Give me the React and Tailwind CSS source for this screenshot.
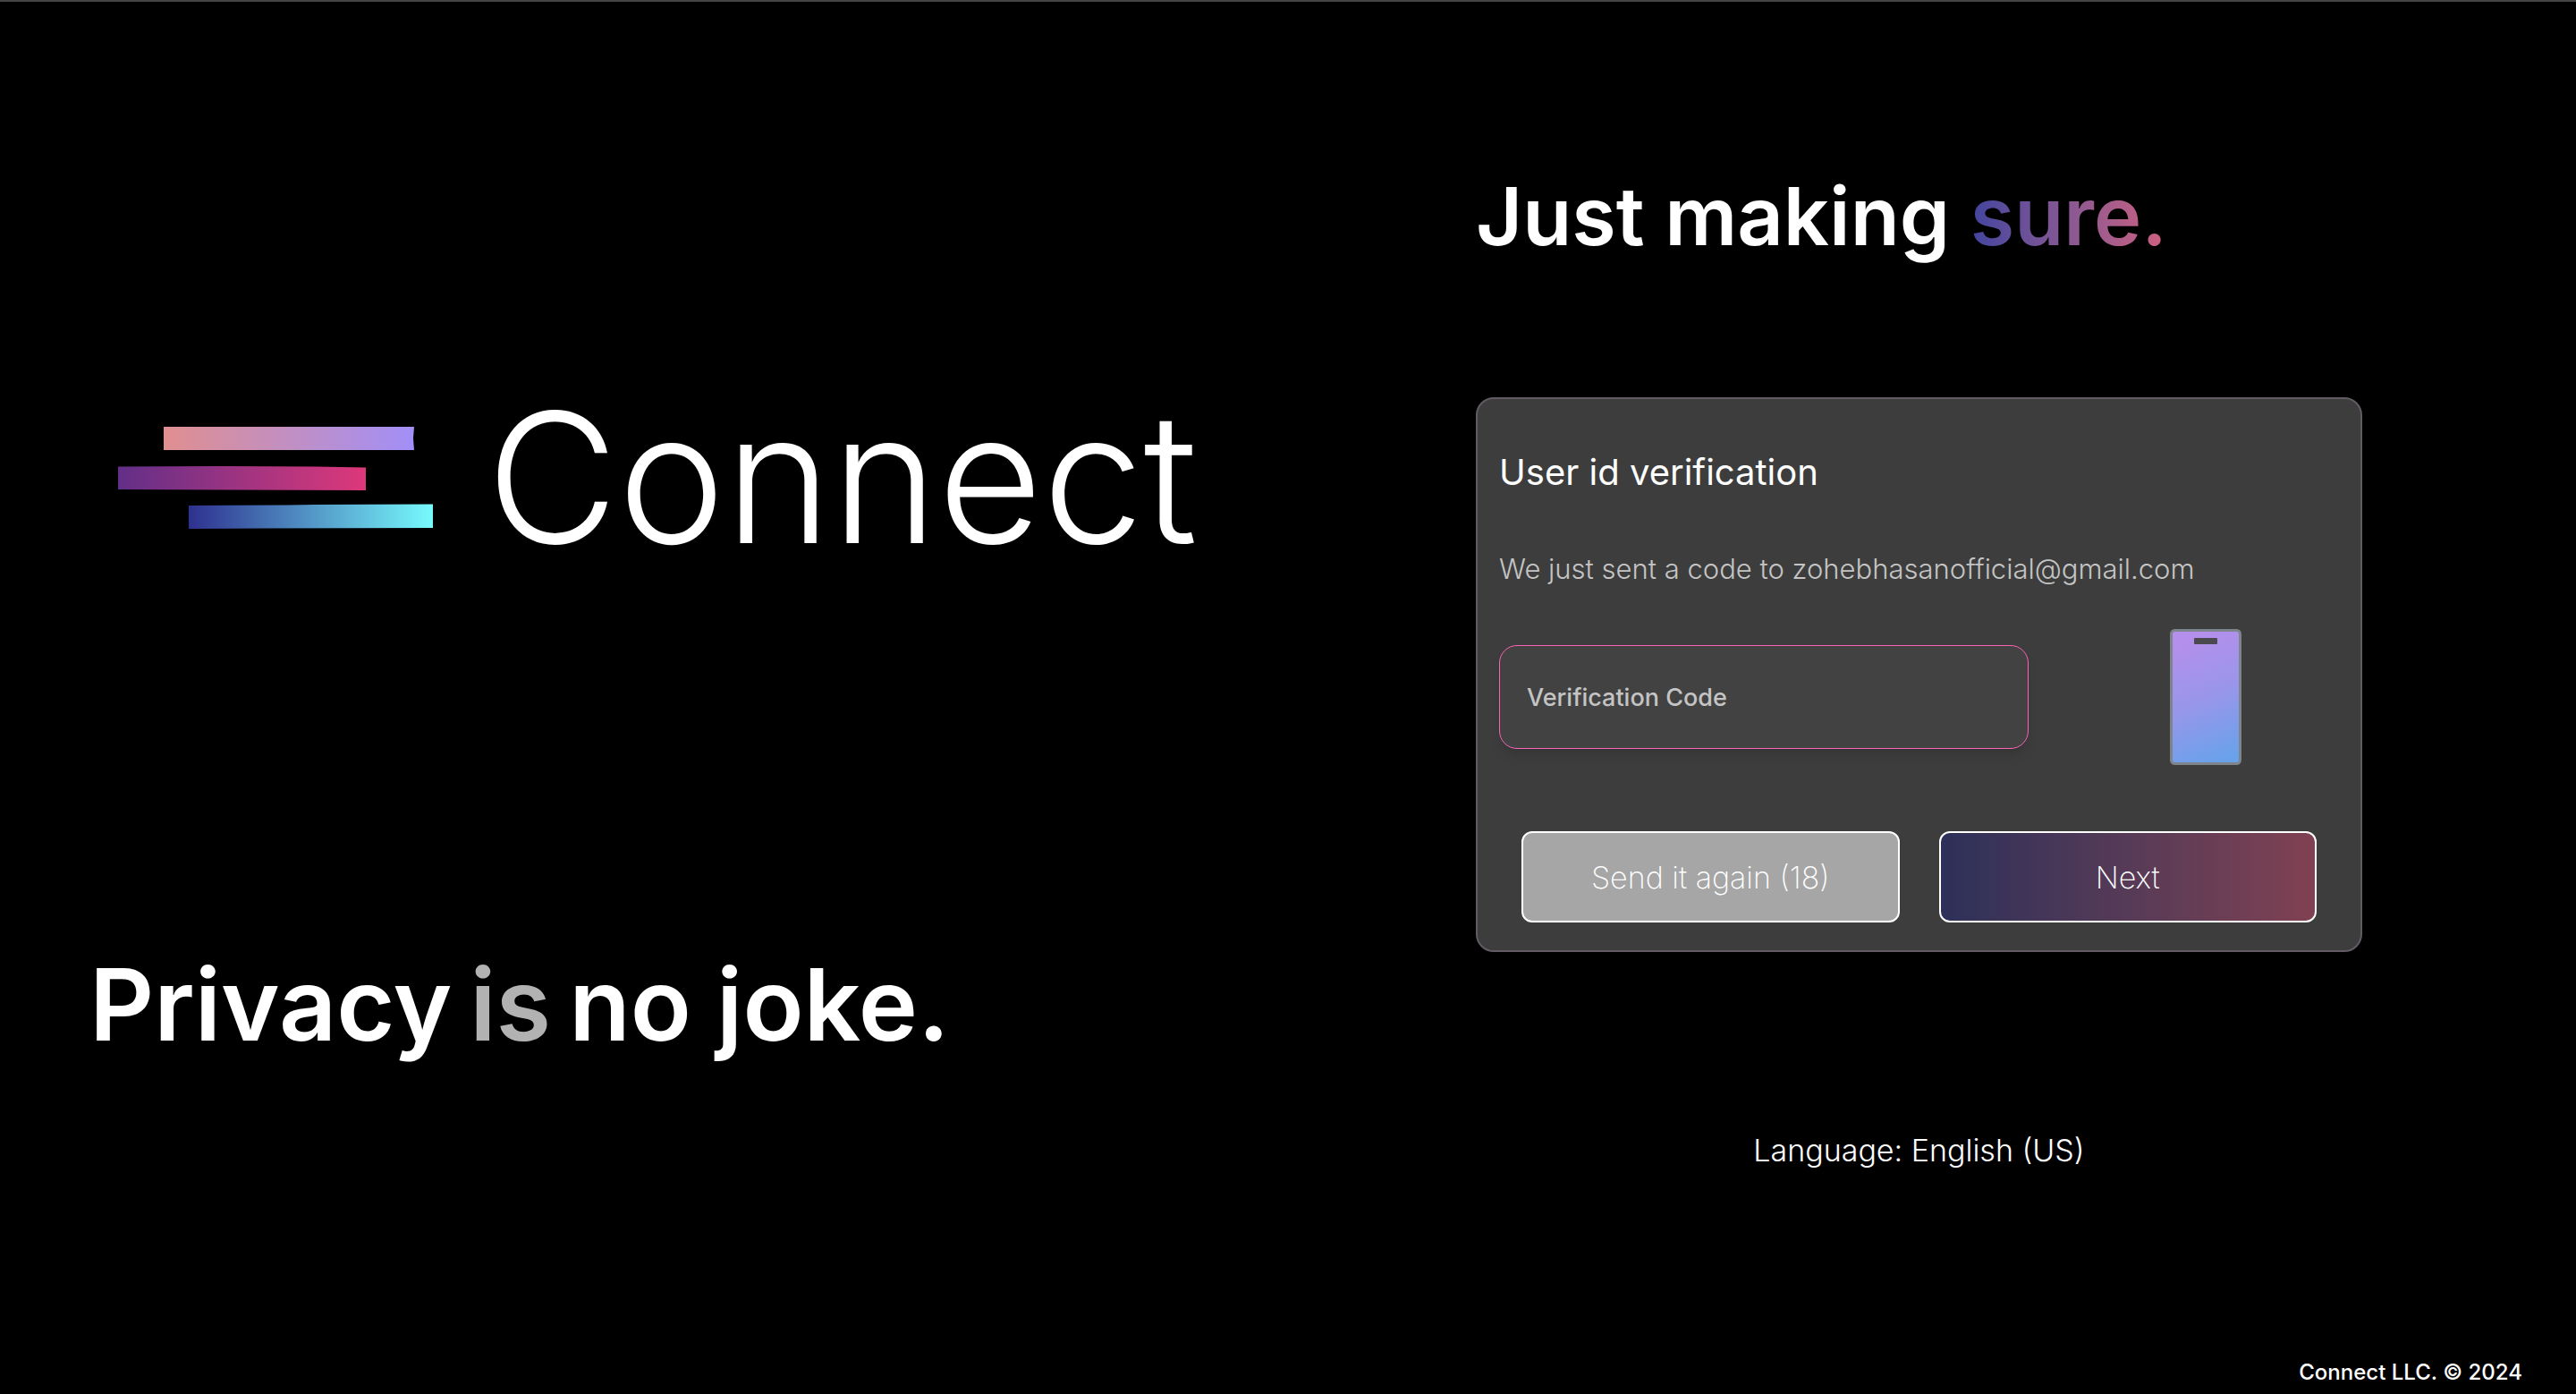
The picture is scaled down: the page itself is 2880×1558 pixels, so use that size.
import { useState } from "react";

function LogoMark() {
  return (
    <svg viewBox="0 0 352 115" className="w-[352px] shrink-0" aria-hidden="true">
      <defs>
        <linearGradient id="bar-top">
          <stop offset="0" stopColor="#e08f8f" />
          <stop offset="0.5" stopColor="#c18fc2" />
          <stop offset="1" stopColor="#a28ff8" />
        </linearGradient>
        <linearGradient id="bar-middle">
          <stop offset="0" stopColor="#622f88" />
          <stop offset="1" stopColor="#dd387a" />
        </linearGradient>
        <linearGradient id="bar-bottom">
          <stop offset="0" stopColor="#2e318f" />
          <stop offset="1" stopColor="#77fafd" />
        </linearGradient>
      </defs>
      <path d="M51 0H331L330 13L331 26H51Z" fill="url(#bar-top)" />
      <path d="M0 44.5L110 44L220 44.5L277 45.500V71L130 70.500L0 70Z" fill="url(#bar-middle)" />
      <path d="M79 88L190 87.500L220 87L352 86.500V113L160 113.500L79 114Z" fill="url(#bar-bottom)" />
    </svg>
  );
}

function PhoneIcon() {
  return (
    <svg viewBox="0 0 80 152" className="w-20" aria-hidden="true">
      <defs>
        <linearGradient id="phone-screen" gradientUnits="userSpaceOnUse" x1="12" y1="12" x2="66" y2="146">
          <stop offset="0" stopColor="#b58fec" />
          <stop offset="0.5" stopColor="#9896ea" />
          <stop offset="1" stopColor="#68a2ea" />
        </linearGradient>
      </defs>
      <rect x="1.500" y="1.500" width="77" height="149" rx="4" fill="url(#phone-screen)" stroke="#7d848c" strokeWidth="3" />
      <rect x="27" y="10" width="26" height="7" rx="1" fill="#49494f" />
    </svg>
  );
}

export default function App() {
  const [code, setCode] = useState("");
  return (
    <div className="flex min-h-screen flex-col border-t-2 border-[#454545] bg-black font-['Inter',sans-serif] text-white">
      <main className="grid grow grid-cols-[1506fr_1374fr]">
        <section className="flex flex-col items-start pt-98">
          <div className="ml-33 flex items-center gap-15">
            <LogoMark />
            <span className="text-[202px] leading-[280px] font-[350]">Connect</span>
          </div>
          <h1 className="mt-92 ml-25 flex gap-5 text-[112px] leading-[160px] font-semibold">
            <span>Privacy</span>
            <span className="text-[#b2b2b2]">is</span>
            <span>no joke.</span>
          </h1>
        </section>
        <section className="flex flex-col pr-[239px] pl-36 pt-45">
          <h2 className="text-[90px] leading-[120px] font-semibold">
            Just making{" "}
            <span className="bg-linear-to-r from-[#42449f] to-[#d0607f] bg-clip-text text-transparent">sure.</span>
          </h2>
          <form
            className="mt-[142px] flex flex-col rounded-[20px] border-2 border-[#625b64] bg-[#3d3d3d] px-6 pt-[50px] pb-[31px]"
            onSubmit={(e) => e.preventDefault()}
          >
            <h3 className="text-[40px] leading-16">User id verification</h3>
            <p className="mt-14 text-[31px] leading-10 font-light text-[#c4c4c4]">
              We just sent a code to zohebhasanofficial@gmail.com
            </p>
            <div className="mt-[47px] flex items-center">
              <input
                type="text"
                aria-label="Verification Code"
                placeholder="Verification Code"
                value={code}
                onChange={(e) => setCode(e.target.value)}
                className="h-29 w-148 rounded-[20px] border border-pink-400 bg-[#424242] px-[30px] text-[27px] font-medium shadow-lg outline-none placeholder:text-[#c4c4c4]"
              />
              <div className="ml-[158px]">
                <PhoneIcon />
              </div>
            </div>
            <div className="mx-[25px] mt-[74px] grid grid-cols-2 gap-11">
              <button type="button" className="h-[102px] rounded-xl border-2 border-white bg-[#a6a6a6] text-[34px] font-extralight">
                Send it again (18)
              </button>
              <button type="submit" className="h-[102px] rounded-xl border-2 border-white bg-linear-to-r from-[#2d3059] to-[#804152] text-[34px] font-extralight">
                Next
              </button>
            </div>
          </form>
          <p className="mt-[202px] text-center text-[34px] leading-10 font-light">Language: English (US)</p>
        </section>
      </main>
      <footer className="px-15 pb-2 text-right text-2xl font-medium">Connect LLC. © 2024</footer>
    </div>
  );
}
